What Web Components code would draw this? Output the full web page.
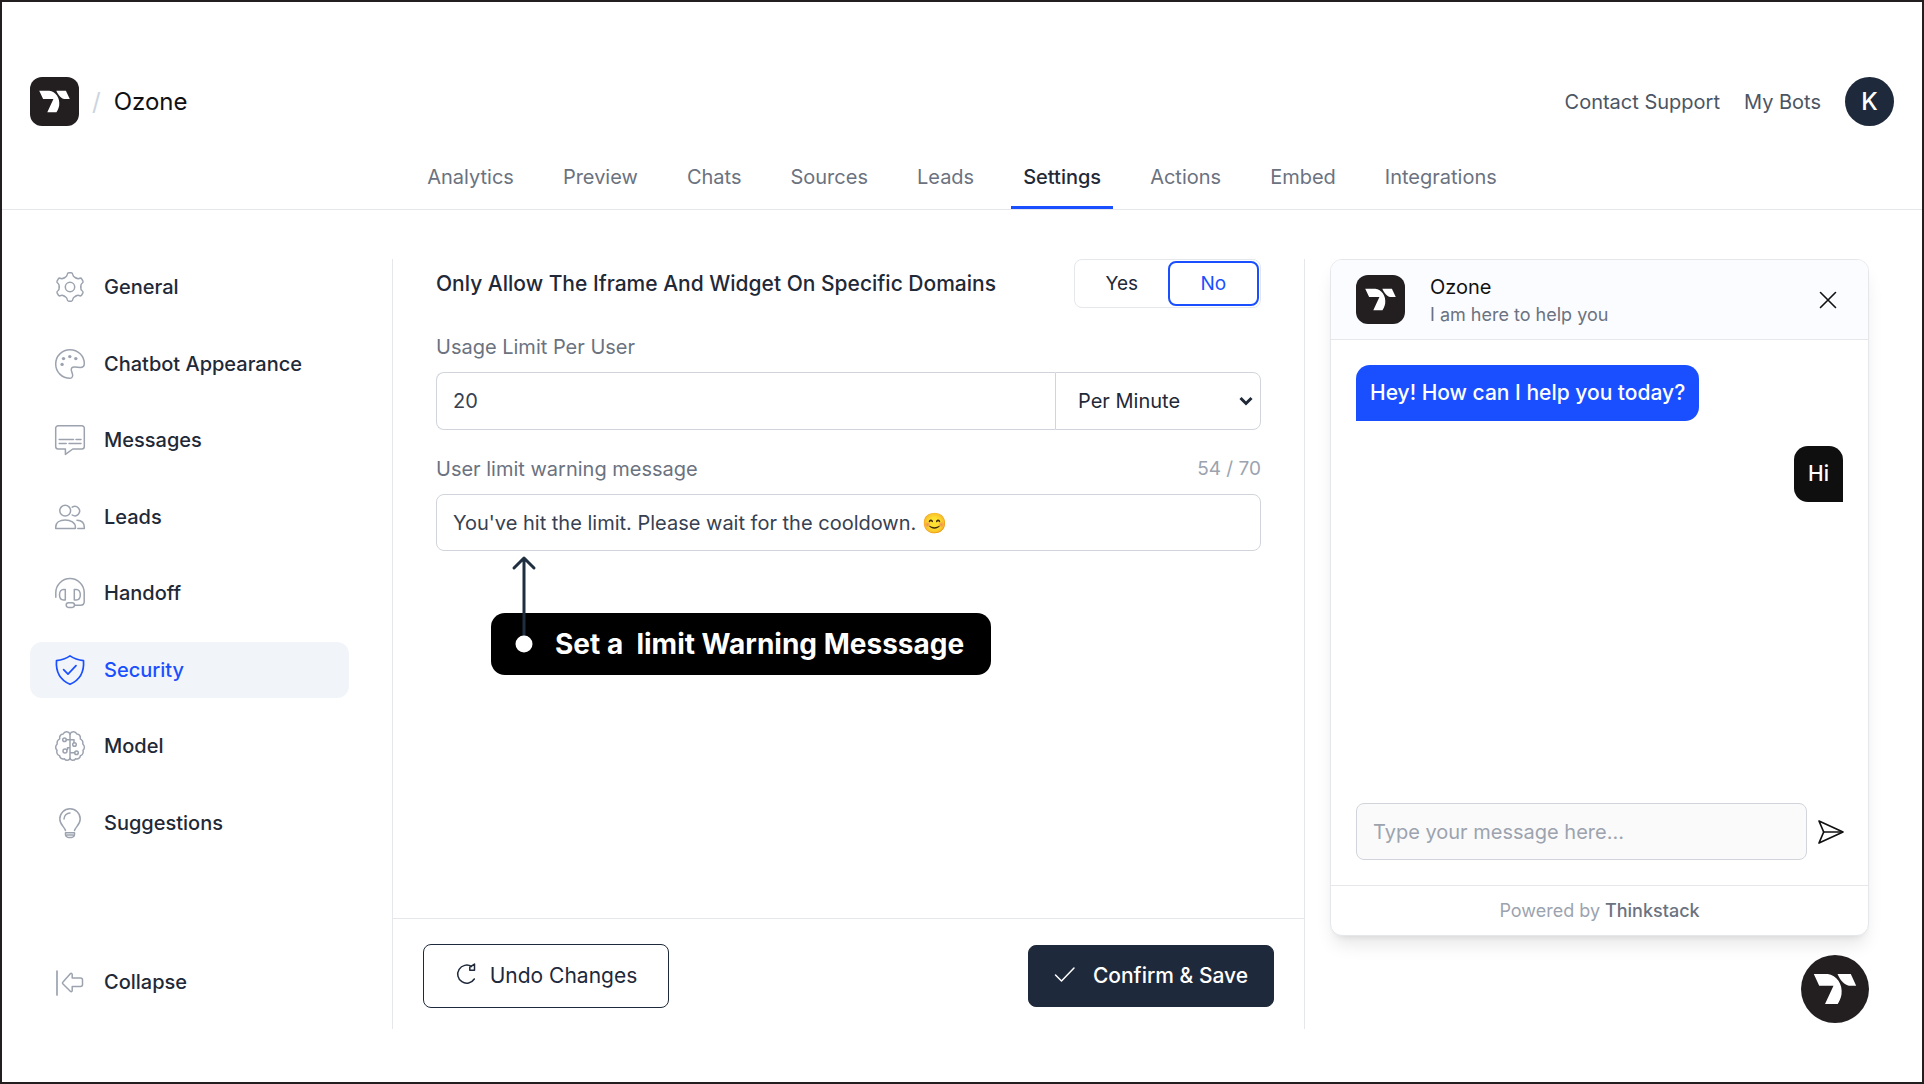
<!DOCTYPE html>
<html lang="en">
<head>
<meta charset="utf-8">
<title>Ozone – Settings</title>
<style>
  body { margin: 0; font-family: Inter, "Noto Color Emoji", sans-serif; font-size: 20px; line-height: 30px; color: #1f2937; background: #fff; }
</style>
</head>
<body>
<ts-app></ts-app>
<script>
const define = (name, html, setup) => {
  const t = document.createElement('template');
  t.innerHTML = `<style>*{box-sizing:border-box}:host([hidden]){display:none}</style>` + html;
  customElements.define(name, class extends HTMLElement {
    connectedCallback() {
      if (this.shadowRoot) return;
      this.attachShadow({ mode: 'open' }).append(t.content.cloneNode(true));
      if (setup) setup(this, this.shadowRoot);
    }
  });
};

const tooth = '<path d="M9.6 5.65C11.2 4.75 11.9 4.4 12.1 3 12.3 1.5 12.7.8 13.7.8h2.6c1 0 1.4.7 1.6 2.2.2 1.4.9 1.75 2.5 2.65"/>';
const ICONS = {
  gear: [0, 60, 120, 180, 240, 300].map(a => `<g transform="rotate(${a} 15 15)">${tooth}</g>`).join('') + '<circle cx="15" cy="15" r="4.7"/>',
  palette: '<path d="M15 29.3C7 29.3.7 23 .7 15S7 .7 15 .7 29.3 7 29.3 14.6c0 2.800-1.300 4-4 4l-5.500-.6c-3-.2-4.200 1.500-3.300 4l1 3.200c.6 2-.4 4.100-2.500 4.100z"/><g fill="currentColor" stroke="none"><circle cx="8.5" cy="9.6" r="1.7"/><circle cx="14.8" cy="7.6" r="1.7"/><circle cx="20.8" cy="9.6" r="1.7"/><circle cx="7.1" cy="15.4" r="1.7"/></g>',
  message: '<path d="M3.2.7h23.6a2.5 2.5 0 0 1 2.5 2.5v18.3a2.5 2.5 0 0 1-2.5 2.5h-9l-7.4 5.4V24H3.2a2.5 2.5 0 0 1-2.5-2.5V3.2A2.5 2.5 0 0 1 3.2.7z"/><path d="M4.2 14.5h14.3M21 14.5h5M4.2 18.5h7M14 18.5h12"/>',
  people: '<circle cx="10.2" cy="8.7" r="5.4"/><path d="M17.2 5.2a4.7 4.7 0 1 1 0 7.8"/><path d="M.7 26.5v-1.3c0-4.600 4-7.200 9.500-7.200s10.200 2.600 10.200 7.200v1.300z"/><path d="M22 18.2c4.6.2 7.3 3 7.3 7v1.3h-6.5"/>',
  headset: '<path d="M.8 19.3v-4.5a14.2 14.2 0 0 1 28.4 0v9a3.6 3.6 0 0 1-3.6 3.5h-6"/><path d="M10.3 11.5v10.5H8.5c-2.5 0-4-2-4-5.200s1.500-5.300 4-5.300zM19.300 11.500v10.500h2c2.500 0 4-2 4-5.200s-1.500-5.300-4-5.300z"/><rect x="11.2" y="24.7" width="8.3" height="4.7" rx="2.3"/>',
  shield: '<path stroke-width="1.7" d="M15 .9c4 2.800 8 4.200 13.500 4.700.8 10.900-3.400 19.300-13.500 23.700C4.900 24.900.7 16.500 1.500 5.600 7 5.100 11 3.700 15 .9z"/><path stroke-width="1.7" d="M8.6 14.700l4.400 4.400 8-8.500"/>',
  brain: '<path d="M15 3.2C14 .2 9.500-.2 8.200 3 5.600 3.200 4.200 5.300 4.700 7.900 2 9.500 1.800 11 2.200 13 .2 15 .2 17.500 2 19.300 1.200 22 2.500 24 4.600 24.600 4.800 27.200 7 28.400 9.300 27.700 11 30 14.400 29.600 15 27.200 15.600 29.600 19 30 20.700 27.700 23 28.400 25.200 27.200 25.400 24.600 27.500 24 28.800 22 28 19.300 29.800 17.500 29.800 15 27.800 13 28.200 11 28 9.500 25.300 7.900 25.800 5.300 24.400 3.200 21.800 3 20.500-.2 16 .2 15 3.200z"/><path d="M15 3v24.500M15 8.700h-3.800M15 8.700h4v3M15 16.800h-2.500v1.700M15 21.800h4.800"/><circle cx="9.5" cy="8.7" r="1.8"/><circle cx="19.5" cy="13.5" r="1.8"/><circle cx="10" cy="20" r="2"/><circle cx="21.5" cy="21.8" r="1.8"/>',
  bulb: '<path d="M10.5 22.5C9.500 19 4.800 16.500 4.800 10.900a10.200 10.200 0 0 1 20.400 0c0 5.600-4.700 8.100-5.700 11.600"/><path d="M9 11a6 6 0 0 1 6-6M10.500 24.700h9v1.700a3 3 0 0 1-3 3h-3a3 3 0 0 1-3-3zM12 27h6"/>',
  collapse: '<path stroke-width="1.7" d="M2 4v24"/><path d="M8 15l7.300-8.200c.8-.9 1.900-.5 1.900.7v3.500H25.500c1.300 0 2 .7 2 2v4.500c0 1.300-.7 2-2 2h-8.300V23.500c0 1.200-1.100 1.600-1.900.7L8 17c-.7-.7-.7-1.400 0-2z"/>',
  redo: '<path d="M20.500 5.500A9 9 0 1 0 23.300 18"/><path d="M23.500 3v6.200h-4.700V6.200z"/>',
  check: '<path d="M5.500 14l6 6L24 7"/>',
  close: '<path stroke-width="1.6" d="M7.500 7.500l15 15M22.500 7.500l-15 15"/>',
  send: '<path stroke-width="1.7" d="M3 4l24 11L3 26l4.700-11z"/><path stroke-width="1.7" d="M7.700 15H26"/>',
};
define('ts-icon', `<style>
  :host{display:block;width:30px;height:30px;flex:none}
  svg{display:block;width:100%;height:100%;overflow:visible}
</style><svg viewBox="0 0 30 30" fill="none" stroke="currentColor" stroke-width="1.5" stroke-linecap="round" stroke-linejoin="round" aria-hidden="true"></svg>`,
(el, root) => { root.querySelector('svg').innerHTML = ICONS[el.getAttribute('name')]; });

define('ts-logo', `<style>
  :host{display:block;width:49px;height:49px;flex:none;border-radius:12px;background:#231f20;overflow:hidden}
  :host([round]){width:68px;height:68px;border-radius:50%}
  svg{display:block;width:100%;height:100%}
</style><svg viewBox="0 0 68 68" fill="#fff" aria-hidden="true"><path d="M12.800 19H26.700C35.500 20 42 29 40.500 39.500 39.800 43.500 38 47 36.700 49H24L32.500 30.700H18.200Z"/><path d="M36.500 19H49.800L55.200 30.700H47.900C42 29 39 24.500 36.500 19Z"/></svg>`);

define('ts-tab', `<style>
  :host{display:block}
  a{display:block;padding:17px 12px 14px;border-bottom:3px solid transparent;color:#6b7280;text-decoration:none}
  :host([active]) a{color:#1f2937;font-weight:500;border-color:#194fff}
</style><a href="#"><slot></slot></a>`);

define('ts-header', `<style>
  :host{display:block;padding-top:75px;border-bottom:1px solid #e5e7eb}
  .row{display:flex;align-items:center;justify-content:space-between;padding:0 28px}
  .brand,.links{display:flex;align-items:center}
  .brand{gap:13px;font-size:24px;color:#111}
  .slash{color:#cbd5e1}
  .links{gap:24px}
  .links a{color:#4b5563;text-decoration:none}
  .avatar{width:49px;height:49px;border:0;border-radius:50%;background:#1e293b;color:#fff;font:500 24px/49px Inter,sans-serif;padding:0}
  nav{display:flex;justify-content:center;gap:25px;margin-top:19px}
</style>
<div class="row">
  <div class="brand"><ts-logo></ts-logo><span class="slash">/</span><span>Ozone</span></div>
  <div class="links"><a href="#">Contact Support</a><a href="#">My Bots</a><button class="avatar">K</button></div>
</div>
<nav><ts-tab>Analytics</ts-tab><ts-tab>Preview</ts-tab><ts-tab>Chats</ts-tab><ts-tab>Sources</ts-tab><ts-tab>Leads</ts-tab><ts-tab active>Settings</ts-tab><ts-tab>Actions</ts-tab><ts-tab>Embed</ts-tab><ts-tab>Integrations</ts-tab></nav>`);

define('ts-side-item', `<style>
  :host{display:block}
  a{display:flex;align-items:center;gap:19px;height:56px;padding:0 25px;border-radius:12px;color:#1f2937;font-weight:500;text-decoration:none}
  ts-icon{color:#9ca3af}
  :host([active]) a{background:#f1f5f9;color:#194fff}
  :host([active]) ts-icon{color:#194fff}
</style><a href="#"><ts-icon></ts-icon><span><slot></slot></span></a>`,
(el, root) => {
  const i = document.createElement('ts-icon');
  i.setAttribute('name', el.getAttribute('icon'));
  root.querySelector('ts-icon').replaceWith(i);
});

define('ts-sidebar', `<style>
  :host{display:flex;flex-direction:column;width:390px;flex:none;padding:0 43px 19px 28px}
  nav{flex:1;display:flex;flex-direction:column;justify-content:space-between;margin-bottom:103px}
</style>
<nav>
  <ts-side-item icon="gear">General</ts-side-item>
  <ts-side-item icon="palette">Chatbot Appearance</ts-side-item>
  <ts-side-item icon="message">Messages</ts-side-item>
  <ts-side-item icon="people">Leads</ts-side-item>
  <ts-side-item icon="headset">Handoff</ts-side-item>
  <ts-side-item icon="shield" active>Security</ts-side-item>
  <ts-side-item icon="brain">Model</ts-side-item>
  <ts-side-item icon="bulb">Suggestions</ts-side-item>
</nav>
<ts-side-item icon="collapse">Collapse</ts-side-item>`);

define('ts-toggle', `<style>
  :host{display:flex;width:187px;height:49px;padding:1px;border:1px solid #e5e7eb;border-radius:8px;font-size:19px}
  button{flex:1;border:2px solid transparent;border-radius:8px;background:none;font:inherit;color:#1f2937;padding:0}
  button[aria-pressed=true]{border-color:#194fff;color:#194fff}
</style><button aria-pressed="false">Yes</button><button aria-pressed="true">No</button>`);

define('ts-callout', `<style>
  :host{display:inline-flex;position:relative;align-items:center;height:62px;padding:0 27px 0 64px;border-radius:14px;background:#000;color:#fff;font-size:28px;font-weight:700;white-space:pre}
  svg{position:absolute;left:20px;bottom:22px;width:26px;height:98px}
</style><svg viewBox="0 0 26 98" fill="none" aria-hidden="true"><path d="M13 88V3M3 13L13 3l10 10" stroke="#1f2f3f" stroke-width="3" stroke-linecap="round" stroke-linejoin="round"/><circle cx="13" cy="89" r="8.500" fill="#fff"/></svg><span><slot></slot></span>`);

define('ts-settings', `<style>
  :host{display:flex;flex-direction:column;flex:1;min-width:0;border:solid #e5e7eb;border-width:0 1px}
  form{flex:1;padding:0 43px}
  .row{display:flex;align-items:center;justify-content:space-between}
  h1{margin:0;font-size:21px;line-height:30px;font-weight:500}
  .label{margin:24px 0 10px;color:#6b7280}
  .count{font-size:19px;color:#9ca3af}
  .group{display:flex;height:58px}
  input{font:inherit;color:#374151;width:100%;min-width:0;height:57px;padding:0 16px;border:1px solid #d1d5db;border-radius:8px;background:#fff;outline:0}
  .group input{flex:1;height:auto;border-radius:8px 0 0 8px;border-right:0}
  .pick{display:grid;width:206px;align-items:center}
  .pick>*{grid-area:1/1}
  select{appearance:none;width:100%;height:58px;font:inherit;color:#1f2937;padding:0 22px;border:1px solid #d1d5db;border-radius:0 8px 8px 0;background:#fff}
  .pick svg{justify-self:end;margin-right:8px;width:14px;height:10px;pointer-events:none}
  ts-callout{margin:62px 0 0 55px}
  footer{display:flex;align-items:center;justify-content:space-between;padding:3px 30px 0;height:111px;border-top:1px solid #e5e7eb}
  footer button{display:flex;align-items:center;height:64px;width:246px;justify-content:center;gap:9px;border:1px solid #1e293b;border-radius:8px;background:#fff;color:#1e293b;font:400 21px/30px Inter,sans-serif;padding:0 4px 0 0}
  footer .save{height:62px;gap:13px;background:#1e293b;color:#fff;font-weight:500}
</style>
<form>
  <div class="row"><h1>Only Allow The Iframe And Widget On Specific Domains</h1><ts-toggle></ts-toggle></div>
  <div class="row label"><label for="limit">Usage Limit Per User</label></div>
  <div class="group">
    <input id="limit" value="20">
    <div class="pick"><select aria-label="Period"><option>Per Minute</option></select><svg viewBox="0 0 14 10" fill="none" stroke="#1f2937" stroke-width="3" aria-hidden="true"><path d="M1.500 2L7 7.500 12.500 2"/></svg></div>
  </div>
  <div class="row label"><label for="warning">User limit warning message</label><span class="count">54 / 70</span></div>
  <input id="warning" value="You've hit the limit. Please wait for the cooldown. 😊">
  <ts-callout>Set a  limit Warning Messsage</ts-callout>
</form>
<footer><button type="button"><ts-icon name="redo"></ts-icon>Undo Changes</button><button class="save" type="button"><ts-icon name="check"></ts-icon>Confirm &amp; Save</button></footer>`);

define('ts-bubble', `<style>
  :host{display:block;align-self:flex-start;padding:13px 14px;border-radius:14px 14px 14px 0;background:#194fff;color:#fff;font-size:21px;font-weight:500}
  :host([mine]){align-self:flex-end;border-radius:14px 14px 0 14px;background:#0f0f0f}
</style><slot></slot>`);

define('ts-chat', `<style>
  :host{display:flex;flex-direction:column;gap:19px;width:617px;flex:none;padding:0 53px 6px 25px}
  .card{flex:1;display:flex;flex-direction:column;border:1px solid #e5e7eb;border-radius:12px;background:#fff;box-shadow:0 12px 18px -4px rgba(0,0,0,.1),0 5px 7px -5px rgba(0,0,0,.1)}
  header{display:flex;align-items:center;gap:25px;height:80px;padding:0 25px;background:#fbfcff;border-bottom:1px solid #e5e7eb;border-radius:11px 11px 0 0}
  .who{flex:1;line-height:27px;padding-top:2px;color:#111}
  .who small{display:block;font-size:18px;color:#6b7280}
  button{border:0;background:none;padding:0;color:#111}
  .log{flex:1;display:flex;flex-direction:column;gap:25px;padding:25px}
  .compose{display:flex;align-items:center;gap:9px;padding:0 22px 25px 25px}
  input{flex:1;min-width:0;height:57px;padding:0 16px;border:1px solid #d1d5db;border-radius:8px;background:#fafafa;font:inherit}
  input::placeholder{color:#9ca3af;opacity:1}
  footer{display:flex;justify-content:center;gap:5px;padding:10px 10px 9px;border-top:1px solid #e5e7eb;color:#9ca3af;font-size:18px}
  footer a{color:#6b7280;font-weight:500;text-decoration:none}
  .launch{align-self:flex-end}
</style>
<section class="card">
  <header><ts-logo></ts-logo><div class="who">Ozone<small>I am here to help you</small></div><button aria-label="Close"><ts-icon name="close"></ts-icon></button></header>
  <div class="log"><ts-bubble>Hey! How can I help you today?</ts-bubble><ts-bubble mine>Hi</ts-bubble></div>
  <div class="compose"><input aria-label="Message" placeholder="Type your message here..."><button aria-label="Send"><ts-icon name="send"></ts-icon></button></div>
  <footer><span>Powered by</span><a href="#">Thinkstack</a></footer>
</section>
<button class="launch" aria-label="Open chat"><ts-logo round></ts-logo></button>`);

define('ts-app', `<style>
  :host{display:flex;flex-direction:column;box-sizing:border-box;min-height:100vh;border:2px solid #231f20}
  main{flex:1;display:flex;padding:49px 0 53px}
  ts-sidebar,ts-settings,ts-chat{box-sizing:border-box}
</style>
<ts-header></ts-header>
<main><ts-sidebar></ts-sidebar><ts-settings></ts-settings><ts-chat></ts-chat></main>`);
</script>
</body>
</html>
